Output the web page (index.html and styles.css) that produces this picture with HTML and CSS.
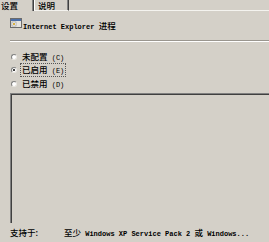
FILE: index.html
```html
<!DOCTYPE html>
<html>
<head>
<meta charset="utf-8">
<link rel="stylesheet" href="styles.css">
</head>
<body>
<div class="tabs">
  <div class="tab tab-active"><span class="cj">设置</span></div>
  <div class="tab tab-second"><span class="cj">说明</span></div>
  <div class="tab-fill"></div>
</div>
<div class="panel">
  <div class="head">
    <svg class="icon" width="12" height="10" viewBox="0 0 12 10">
      <rect x="0.5" y="0.5" width="11" height="9" fill="#e8e6e0" stroke="#6b6b6b"/>
      <rect x="1" y="1" width="10" height="2" fill="#4a6ea8"/>
      <rect x="2" y="4" width="4" height="4" fill="#ffffff" stroke="#8a8a8a" stroke-width="0.6"/>
      <rect x="3" y="5" width="2" height="2" fill="#d8b040"/>
    </svg>
    <span class="title">Internet Explorer <span class="cj">进程</span></span>
  </div>
  <div class="sep"></div>
  <div class="options">
    <div class="opt"><span class="radio"></span><span class="lbl"><span class="cj">未配置</span> (C)</span></div>
    <div class="opt"><span class="radio radio-on"></span><span class="lbl lbl-focus"><span class="cj">已启用</span> (E)</span></div>
    <div class="opt"><span class="radio"></span><span class="lbl"><span class="cj">已禁用</span> (D)</span></div>
  </div>
  <div class="box"></div>
  <div class="foot">
    <span class="foot-key cj">支持于:</span>
    <span class="foot-val"><span class="cj">至少</span> Windows XP Service Pack 2 <span class="cj">或</span> Windows...</span>
  </div>
</div>
</body>
</html>
```

FILE: styles.css
```css
html, body {
  margin: 0;
  padding: 0;
}
body {
  width: 269px;
  height: 242px;
  overflow: hidden;
  background: #d4d0c8;
  color: #000;
  font-family: "Liberation Mono", "Noto Sans CJK SC", monospace;
  font-size: 7px;
  font-weight: bold;
}
.cj {
  font-family: "Noto Sans CJK SC", sans-serif;
  font-size: 8.5px;
  font-weight: 500;
}
.tabs {
  display: flex;
  height: 11px;
}
.tab {
  box-sizing: border-box;
  height: 11px;
  line-height: 10px;
  overflow: hidden;
  border-right: 1px solid #404040;
  box-shadow: inset -1px 0 0 #808080;
}
.tab-active {
  width: 34px;
  padding-left: 1px;
}
.tab-second {
  width: 35px;
  padding-left: 3px;
  border-bottom: 1px solid #f4f3ef;
  border-left: 1px solid #ffffff;
}
.tab-fill {
  flex: 1;
  box-sizing: border-box;
  height: 11px;
  border-bottom: 1px solid #f4f3ef;
}
.panel {
  padding-left: 10px;
}
.head {
  display: flex;
  align-items: flex-end;
  margin-top: 6px;
  height: 16px;
}
.icon {
  display: block;
  margin-bottom: 5px;
}
.title {
  margin-left: 1px;
  line-height: 11px;
}
.sep {
  margin-top: 7px;
  height: 0;
  border-top: 1px solid #9a968f;
  border-bottom: 1px solid #ffffff;
}
.options {
  margin-top: 8px;
  display: flex;
  flex-direction: column;
}
.opt {
  display: flex;
  align-items: center;
  height: 13.5px;
}
.radio {
  box-sizing: border-box;
  width: 6px;
  height: 6px;
  margin-left: 1px;
  margin-right: 5px;
  border-radius: 50%;
  background: #ffffff;
  border: 1px solid;
  border-color: #808080 #e8e6e0 #e8e6e0 #808080;
  position: relative;
}
.radio-on::after {
  content: "";
  position: absolute;
  left: 1px;
  top: 1px;
  width: 2px;
  height: 2px;
  border-radius: 50%;
  background: #000;
}
.lbl {
  line-height: 10px;
  padding: 0 1px;
  border: 1px dotted transparent;
  margin-left: -2px;
  font-weight: normal;
}
.lbl-focus {
  border-color: #555;
}
.box {
  margin-top: 2px;
  width: 270px;
  height: 130px;
  box-sizing: border-box;
  border-top: 1px solid #808080;
  border-left: 1px solid #808080;
  box-shadow: inset 1px 1px 0 #404040;
}
.foot {
  display: flex;
  align-items: center;
  height: 16px;
  margin-top: 1px;
}
.foot-key {
  width: 54px;
}
.foot-val {
  white-space: nowrap;
}
```
